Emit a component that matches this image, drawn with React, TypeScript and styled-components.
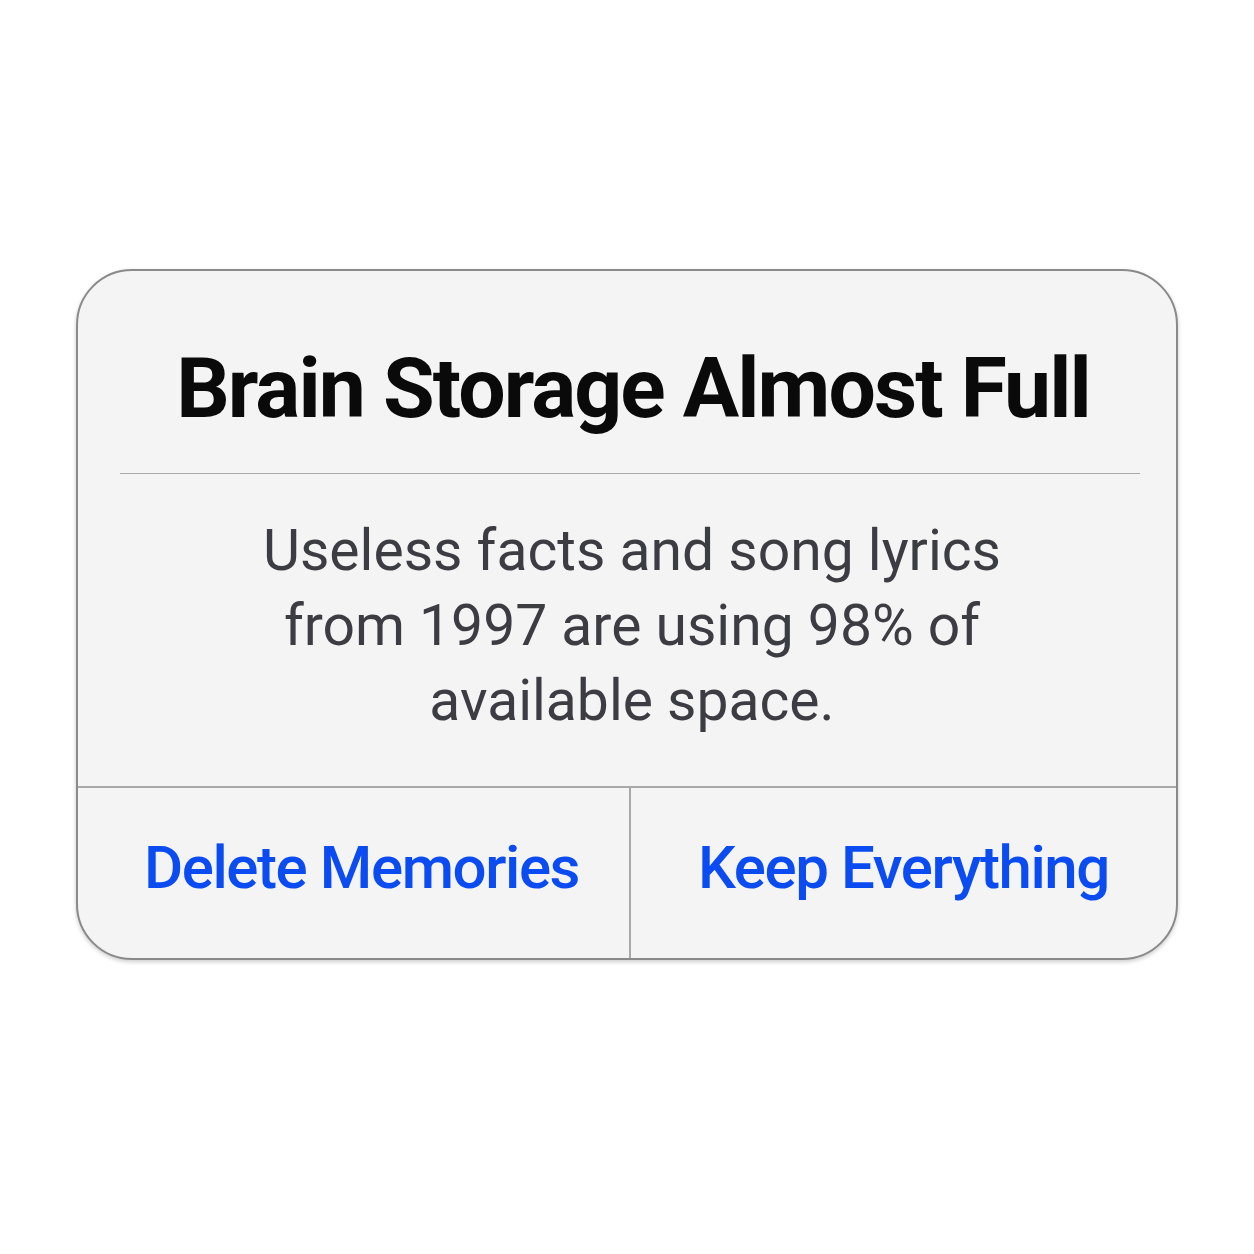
import styled, { createGlobalStyle } from "styled-components";

const GlobalStyle = createGlobalStyle`
  html, body {
    margin: 0;
    padding: 0;
    background: #ffffff;
  }
  body {
    font-family: Roboto, "Liberation Sans", Arial, sans-serif;
    -webkit-font-smoothing: antialiased;
  }
`;

const Page = styled.main`
  width: 1254px;
  height: 1254px;
  display: flex;
  justify-content: center;
  align-items: flex-start;
  padding-top: 269px;
  box-sizing: border-box;
`;

const Alert = styled.section`
  width: 1102px;
  box-sizing: border-box;
  background: #f4f4f4;
  border: 2px solid #8a8a8a;
  border-radius: 56px;
  box-shadow: 0 2px 4px rgba(0, 0, 0, 0.2);
  overflow: hidden;
  display: flex;
  flex-direction: column;
`;

const Header = styled.header`
  padding: 76px 36px 0 42px;
  display: flex;
  flex-direction: column;
  align-items: center;
`;

const Title = styled.h1`
  margin: 0 0 42px;
  padding-left: 6px;
  font-size: 84px;
  line-height: 84px;
  font-weight: 700;
  letter-spacing: -1.9px;
  color: #0a0a0a;
  text-align: center;
`;

const Rule = styled.hr`
  width: 100%;
  margin: 0;
  border: none;
  border-top: 1.5px solid #a9a9a9;
`;

const Message = styled.p`
  margin: 0 auto;
  max-width: 800px;
  padding: 39px 0 48px 10px;
  font-size: 57px;
  line-height: 75px;
  font-weight: 400;
  color: #3c3c43;
  text-align: center;
`;

const Actions = styled.div`
  display: grid;
  grid-template-columns: 553px 1fr;
  border-top: 2px solid #a9a9a9;
  height: 170px;
`;

const ActionButton = styled.button<{ $divider?: boolean }>`
  appearance: none;
  background: transparent;
  border: none;
  border-right: ${(p) => (p.$divider ? "2px solid #a9a9a9" : "none")};
  padding: 0 0 12px ${(p) => (p.$divider ? "16px" : "0")};
  font-family: inherit;
  font-size: 60px;
  font-weight: 500;
  letter-spacing: -1.4px;
  color: #0a4cf2;
  cursor: pointer;
  display: flex;
  align-items: center;
  justify-content: center;
`;

export default function App() {
  return (
    <>
      <GlobalStyle />
      <Page>
        <Alert role="alertdialog">
          <Header>
            <Title>Brain Storage Almost Full</Title>
            <Rule />
          </Header>
          <Message>
            Useless facts and song lyrics from 1997 are using 98% of available
            space.
          </Message>
          <Actions>
            <ActionButton $divider>Delete Memories</ActionButton>
            <ActionButton>Keep Everything</ActionButton>
          </Actions>
        </Alert>
      </Page>
    </>
  );
}
